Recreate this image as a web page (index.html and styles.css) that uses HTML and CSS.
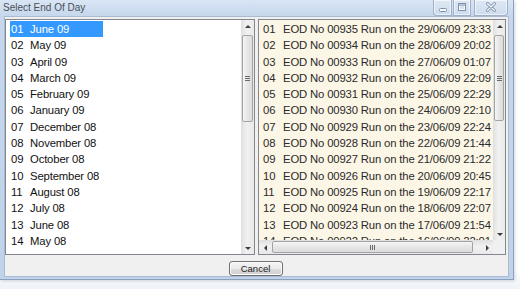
FILE: index.html
```html
<!DOCTYPE html>
<html>

<head>
    <title>Select End Of Day</title>
    <link rel="stylesheet" href="styles.css">
</head>

<body>
    <div class="window">
        <div class="titlebar">
            <span class="title">Select End Of Day</span>
            <div class="caption">
                <span class="cap-btn min">
                    <svg width="17" height="15" viewBox="0 0 17 15">
                        <rect x="5.5" y="8.5" width="7" height="3" rx="1" fill="#fbfcfe" stroke="#7d90ab" />
                    </svg>
                </span>
                <span class="cap-btn max">
                    <svg width="16" height="15" viewBox="0 0 16 15">
                        <rect x="4.5" y="3.5" width="7" height="7" fill="none" stroke="#7d90ab" />
                        <rect x="5.5" y="4.5" width="5" height="5" fill="none" stroke="#fbfcfe" />
                        <line x1="5" y1="5" x2="11" y2="5" stroke="#7d90ab" />
                    </svg>
                </span>
                <span class="cap-btn close">
                    <svg width="32" height="15" viewBox="0 0 32 15">
                        <path d="M12.5 3.5 L19.5 10.5 M19.5 3.5 L12.5 10.5" stroke="#7d90ab" stroke-width="3" stroke-linecap="round" />
                        <path d="M12.5 3.5 L19.5 10.5 M19.5 3.5 L12.5 10.5" stroke="#fbfcfe" stroke-width="1.2" stroke-linecap="round" />
                    </svg>
                </span>
            </div>
        </div>
        <div class="client">
            <div class="lists">
                <div class="listbox months">
                    <ul class="items">
                        <li class="selected"><span class="num">01</span>June 09</li>
                        <li><span class="num">02</span>May 09</li>
                        <li><span class="num">03</span>April 09</li>
                        <li><span class="num">04</span>March 09</li>
                        <li><span class="num">05</span>February 09</li>
                        <li><span class="num">06</span>January 09</li>
                        <li><span class="num">07</span>December 08</li>
                        <li><span class="num">08</span>November 08</li>
                        <li><span class="num">09</span>October 08</li>
                        <li><span class="num">10</span>September 08</li>
                        <li><span class="num">11</span>August 08</li>
                        <li><span class="num">12</span>July 08</li>
                        <li><span class="num">13</span>June 08</li>
                        <li><span class="num">14</span>May 08</li>
                    </ul>
                    <div class="vscroll">
                        <span class="sb-btn"><span class="arrow up"></span></span>
                        <div class="track">
                            <div class="thumb v-thumb-left"><span class="grip-h"></span></div>
                        </div>
                        <span class="sb-btn"><span class="arrow down"></span></span>
                    </div>
                </div>
                <div class="listbox runs">
                    <ul class="items">
                        <li><span class="num">01</span>EOD No 00935 Run on the 29/06/09 23:33</li>
                        <li><span class="num">02</span>EOD No 00934 Run on the 28/06/09 20:02</li>
                        <li><span class="num">03</span>EOD No 00933 Run on the 27/06/09 01:07</li>
                        <li><span class="num">04</span>EOD No 00932 Run on the 26/06/09 22:09</li>
                        <li><span class="num">05</span>EOD No 00931 Run on the 25/06/09 22:29</li>
                        <li><span class="num">06</span>EOD No 00930 Run on the 24/06/09 22:10</li>
                        <li><span class="num">07</span>EOD No 00929 Run on the 23/06/09 22:24</li>
                        <li><span class="num">08</span>EOD No 00928 Run on the 22/06/09 21:44</li>
                        <li><span class="num">09</span>EOD No 00927 Run on the 21/06/09 21:22</li>
                        <li><span class="num">10</span>EOD No 00926 Run on the 20/06/09 20:45</li>
                        <li><span class="num">11</span>EOD No 00925 Run on the 19/06/09 22:17</li>
                        <li><span class="num">12</span>EOD No 00924 Run on the 18/06/09 22:07</li>
                        <li><span class="num">13</span>EOD No 00923 Run on the 17/06/09 21:54</li>
                        <li><span class="num">14</span>EOD No 00922 Run on the 16/06/09 22:01</li>
                    </ul>
                    <div class="vscroll">
                        <span class="sb-btn"><span class="arrow up"></span></span>
                        <div class="track">
                            <div class="thumb v-thumb-right"><span class="grip-h"></span></div>
                        </div>
                        <span class="sb-btn"><span class="arrow down"></span></span>
                    </div>
                    <div class="hscroll">
                        <span class="sb-btn"><span class="arrow left"></span></span>
                        <div class="track">
                            <div class="thumb h-thumb"><span class="grip-v"></span></div>
                        </div>
                        <span class="sb-btn"><span class="arrow right"></span></span>
                    </div>
                    <div class="corner"></div>
                </div>
            </div>
            <div class="actions">
                <button class="btn">Cancel</button>
            </div>
        </div>
    </div>
</body>

</html>
```

FILE: styles.css
```css
body {
    margin: 0;
    width: 520px;
    height: 289px;
    overflow: hidden;
    background: linear-gradient(to bottom, #ffffff 270px, #eef3f9 289px);
    font-family: "Liberation Sans", sans-serif;
}

.window {
    width: 513px;
    height: 279px;
    display: flex;
    flex-direction: column;
    background: linear-gradient(to bottom, #d9e5f4 0, #c6d7ed 16px, #c0d3ea 100%);
    border-right: 1px solid #8aa0bd;
    border-bottom: 1px solid #8aa0bd;
    box-shadow: 1px 1px 3px rgba(80, 100, 130, 0.25);
}

/* title bar */
.titlebar {
    height: 16px;
    display: flex;
    align-items: flex-start;
}

.title {
    font-size: 10px;
    color: #4b4f55;
    padding: 2px 0 0 3px;
}

.caption {
    margin-left: auto;
    margin-right: 5px;
    display: flex;
    gap: 1px;
}

.cap-btn {
    height: 15px;
    display: flex;
    border: 1px solid #9eb1ca;
    border-top: none;
    background: linear-gradient(to bottom, #dfe8f4, #cedcee);
    box-shadow: inset 0 0 0 1px rgba(255, 255, 255, 0.6);
}

.cap-btn.min {
    border-radius: 0 0 0 4px;
}

.cap-btn.close {
    margin-left: 2px;
    border-radius: 0 0 4px 0;
}

/* client area */
.client {
    flex: 1;
    margin: 0 4px 3px 4px;
    background: #f0f0f0;
    border: 1px solid #a9bad1;
    display: flex;
    flex-direction: column;
}

.lists {
    display: flex;
    gap: 3px;
    padding-top: 2px;
    height: 236px;
}

.listbox {
    border: 1px solid #828790;
    display: grid;
    overflow: hidden;
    font-size: 11.3px;
    letter-spacing: -0.15px;
}

.listbox.months {
    width: 248px;
    background: #ffffff;
    color: #111;
    grid-template-columns: minmax(0, 1fr) 13px;
}

.listbox.runs {
    width: 246px;
    background: #fcf6e6;
    color: #2a2a2a;
    grid-template-columns: 234px 12px;
    grid-template-rows: 220px 14px;
}

.runs .items {
    grid-column: 1;
    grid-row: 1;
}

.runs .vscroll {
    grid-column: 2;
    grid-row: 1;
}

.runs .hscroll {
    grid-column: 1;
    grid-row: 2;
}

.runs .corner {
    grid-column: 2;
    grid-row: 2;
}

.items {
    list-style: none;
    margin: 0;
    padding: 1px 0 0 0;
    overflow: hidden;
    min-width: 0;
}

.items li {
    height: 16.3px;
    line-height: 16.3px;
    white-space: nowrap;
    padding-left: 1px;
}

.months .items li {
    margin-left: 4px;
}

.runs .items li {
    padding-left: 4px;
}

.items li.selected {
    width: 92px;
    background: #3399ff;
    color: #ffffff;
}

.num {
    display: inline-block;
    width: 19px;
}

.runs .num {
    width: 20px;
}

/* scroll bars */
.vscroll {
    display: flex;
    flex-direction: column;
    background: linear-gradient(to right, #e3e3e3, #f1f1f1 40%, #e9e9e9);
    border-left: 1px solid #e0e0e0;
}

.hscroll {
    display: flex;
    background: linear-gradient(to bottom, #e3e3e3, #f1f1f1 40%, #e9e9e9);
    border-top: 1px solid #e0e0e0;
}

.corner {
    background: #f0f0f0;
}

.sb-btn {
    flex: 0 0 12px;
    display: flex;
    align-items: center;
    justify-content: center;
}

.track {
    flex: 1;
    display: flex;
}

.vscroll .track {
    flex-direction: column;
}

.thumb {
    border: 1px solid #a3a3a3;
    border-radius: 2px;
    display: flex;
    align-items: center;
    justify-content: center;
    box-sizing: border-box;
}

.vscroll .thumb {
    margin: 3px 1px 0 0;
    background: linear-gradient(to right, #f6f6f6, #e6e6e6 50%, #dcdcdc);
}

.v-thumb-left {
    height: 87px;
}

.v-thumb-right {
    height: 86px;
}

.h-thumb {
    margin: 0 0 1px 1px;
    width: 201px;
    background: linear-gradient(to bottom, #f6f6f6, #e6e6e6 50%, #dcdcdc);
}

.grip-h {
    width: 5px;
    height: 5px;
    background: repeating-linear-gradient(to bottom, #6a6a6a 0, #6a6a6a 1px, transparent 1px, transparent 2px);
}

.grip-v {
    width: 5px;
    height: 5px;
    background: repeating-linear-gradient(to right, #6a6a6a 0, #6a6a6a 1px, transparent 1px, transparent 2px);
}

.arrow {
    width: 0;
    height: 0;
}

.arrow.up {
    border-left: 3px solid transparent;
    border-right: 3px solid transparent;
    border-bottom: 3px solid #3c3c3c;
}

.arrow.down {
    border-left: 3px solid transparent;
    border-right: 3px solid transparent;
    border-top: 3px solid #3c3c3c;
}

.arrow.left {
    border-top: 3px solid transparent;
    border-bottom: 3px solid transparent;
    border-right: 3px solid #3c3c3c;
}

.arrow.right {
    border-top: 3px solid transparent;
    border-bottom: 3px solid transparent;
    border-left: 3px solid #3c3c3c;
}

/* button row */
.actions {
    display: flex;
    justify-content: center;
    padding: 6px 2px 0 0;
}

.btn {
    width: 54px;
    height: 15px;
    padding: 0;
    font-family: "Liberation Sans", sans-serif;
    font-size: 9.5px;
    color: #1a1a1a;
    border: 1px solid #707070;
    border-radius: 3px;
    background: linear-gradient(to bottom, #f4f4f4 0, #ebebeb 50%, #dddddd 51%, #cfcfcf 100%);
    box-shadow: inset 0 0 0 1px #fcfcfc;
}
```
